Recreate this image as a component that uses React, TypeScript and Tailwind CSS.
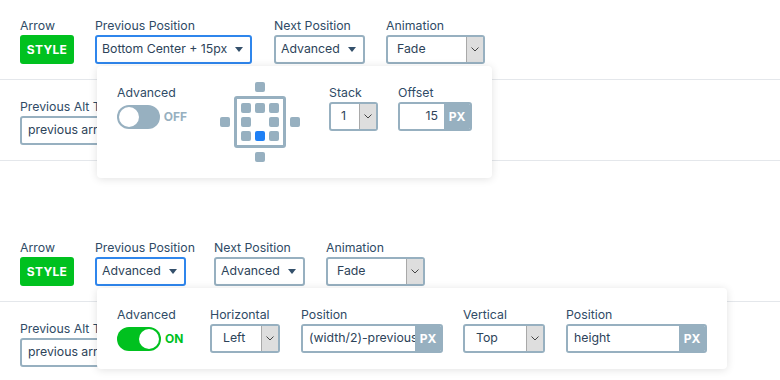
import React from "react";

const font = { fontFamily: "Inter, 'Noto Sans', sans-serif" };

const Label = ({ children }: { children: React.ReactNode }) => (
  <div className="text-[12.3px] leading-[18px] text-[#2f4b66] whitespace-nowrap">{children}</div>
);

const CaretSelect = ({ value, w, focused }: { value: string; w: string; focused?: boolean }) => (
  <div
    className={`${w} h-[29px] flex items-center justify-between rounded-[3px] border-2 bg-white pl-[5px] pr-[7px] ${
      focused ? "border-[#2f86ec]" : "border-[#97b0c0]"
    }`}
  >
    <span className="text-[12.3px] text-[#2d4359] whitespace-nowrap">{value}</span>
    <span className="w-0 h-0 border-l-[4px] border-r-[4px] border-t-[5px] border-l-transparent border-r-transparent border-t-[#34506b]" />
  </div>
);

const Chevron = () => (
  <svg width="8" height="5" viewBox="0 0 8 5" fill="none">
    <path d="M0.5 0.5 L4 4 L7.5 0.5" stroke="#444" strokeWidth="1" />
  </svg>
);

const ChevronSelect = ({ value, w, pl }: { value: string; w: string; pl: string }) => (
  <div className={`${w} h-[29px] flex rounded-[3px] border-2 border-[#97b0c0] bg-white overflow-hidden`}>
    <div className={`flex-1 flex items-center ${pl} text-[12.3px] text-[#2d4359]`}>{value}</div>
    <div className="w-[17px] bg-[#dedede] border-l border-[#a9a9a9] flex items-center justify-center">
      <Chevron />
    </div>
  </div>
);

const PxInput = ({ value, w, right }: { value: string; w: string; right?: boolean }) => (
  <div className={`${w} h-[29px] flex rounded-[3px] border-2 border-[#97b0c0] overflow-hidden`}>
    <input
      readOnly
      value={value}
      className={`flex-1 min-w-0 w-full bg-white outline-none text-[12.3px] text-[#2d4359] ${
        right ? "text-right pr-[6px]" : "pl-[6px]"
      }`}
    />
    <div className="w-[26px] shrink-0 bg-[#97b0c0] flex items-center justify-center text-[12px] font-bold text-white">
      PX
    </div>
  </div>
);

const Toggle = ({ on }: { on?: boolean }) => (
  <div className="flex items-center gap-1 mt-[3px]">
    <div
      className={`w-[44px] h-6 rounded-full p-[2px] flex ${on ? "bg-[#00c11f] justify-end" : "bg-[#97b0c0] justify-start"}`}
    >
      <div className="w-5 h-5 rounded-full bg-white" />
    </div>
    <span className={`text-[12px] font-bold ${on ? "text-[#00c11f]" : "text-[#97b0c0]"}`}>{on ? "ON" : "OFF"}</span>
  </div>
);

const Sq = ({ active }: { active?: boolean }) => (
  <div className={`w-[10px] h-[10px] rounded-[2px] ${active ? "bg-[#1f80f5]" : "bg-[#97b0c0]"}`} />
);

const PositionGrid = () => (
  <div className="flex flex-col items-center gap-1 mt-[-2px] ml-[33px]">
    <Sq />
    <div className="flex items-center gap-1">
      <Sq />
      <div className="w-[52px] h-[52px] border-[3px] border-[#97b0c0] rounded-[3px] flex items-center justify-center">
        <div className="grid grid-cols-3 gap-1">
          <Sq />
          <Sq />
          <Sq />
          <Sq />
          <div />
          <Sq />
          <Sq />
          <Sq active />
          <Sq />
        </div>
      </div>
      <Sq />
    </div>
    <Sq />
  </div>
);

const Popup = ({ children }: { children: React.ReactNode }) => (
  <div className="absolute left-[97px] top-[66px] bg-white rounded-[4px] shadow-[0_1px_8px_rgba(0,0,0,0.12)] flex items-start pl-5 pr-5 pb-4">
    {children}
  </div>
);

const Section = ({
  prev,
  prevW,
  nextMl,
  popup,
}: {
  prev: string;
  prevW: string;
  nextMl: string;
  popup: React.ReactNode;
}) => (
  <section className="relative">
    <div className="flex items-start gap-[21px] pl-5 pt-[17px] pb-[15px] border-b border-[#e4e7eb]">
      <div className="flex flex-col w-[54px]">
        <Label>Arrow</Label>
        <div className="h-[29px] rounded-[3px] bg-[#00c11f] flex items-center justify-center text-[12px] font-bold tracking-[0.3px] text-white">
          STYLE
        </div>
      </div>
      <div className="flex flex-col">
        <Label>Previous Position</Label>
        <CaretSelect value={prev} w={prevW} focused />
      </div>
      <div className={`flex flex-col ${nextMl}`}>
        <Label>Next Position</Label>
        <CaretSelect value="Advanced" w="w-[91px]" />
      </div>
      <div className="flex flex-col">
        <Label>Animation</Label>
        <ChevronSelect value="Fade" w="w-[99px]" pl="pl-[9px]" />
      </div>
    </div>
    <div className="pl-5 pt-[18px] pb-[15px] border-b border-[#e4e7eb]">
      <Label>Previous Alt Text</Label>
      <div className="w-[240px] h-[29px] rounded-[3px] border-2 border-[#97b0c0] flex items-center pl-[6px] text-[12.3px] text-[#2d4359]">
        previous arrow
      </div>
    </div>
    {popup}
  </section>
);

export default function App() {
  return (
    <div className="w-[780px] h-[380px] bg-white overflow-hidden" style={font}>
      <Section
        prev="Bottom Center + 15px"
        prevW="w-[157px]"
        nextMl="ml-[1px]"
        popup={
          <Popup>
            <div className="flex flex-col w-[70px] pt-[18px]">
              <Label>Advanced</Label>
              <Toggle />
            </div>
            <div className="pt-[18px]">
              <PositionGrid />
            </div>
            <div className="flex flex-col ml-[29px] pt-[18px]">
              <Label>Stack</Label>
              <ChevronSelect value="1" w="w-[49px]" pl="pl-[10px]" />
            </div>
            <div className="flex flex-col ml-5 pt-[18px]">
              <Label>Offset</Label>
              <PxInput value="15" w="w-[74px]" right />
            </div>
          </Popup>
        }
      />
      <div className="mt-[61px]">
        <Section
          prev="Advanced"
          prevW="w-[91px]"
          nextMl="ml-[-2px]"
          popup={
            <Popup>
              <div className="flex flex-col w-[70px] pt-[18px]">
                <Label>Advanced</Label>
                <Toggle on />
              </div>
              <div className="flex flex-col ml-[23px] pt-[18px]">
                <Label>Horizontal</Label>
                <ChevronSelect value="Left" w="w-[70px]" pl="pl-[11px]" />
              </div>
              <div className="flex flex-col ml-[21px] pt-[18px]">
                <Label>Position</Label>
                <PxInput value="(width/2)-previous_width" w="w-[142px]" />
              </div>
              <div className="flex flex-col ml-5 pt-[18px]">
                <Label>Vertical</Label>
                <ChevronSelect value="Top" w="w-[82px]" pl="pl-[11px]" />
              </div>
              <div className="flex flex-col ml-[21px] pt-[18px]">
                <Label>Position</Label>
                <PxInput value="height" w="w-[141px]" />
              </div>
            </Popup>
          }
        />
      </div>
    </div>
  );
}
